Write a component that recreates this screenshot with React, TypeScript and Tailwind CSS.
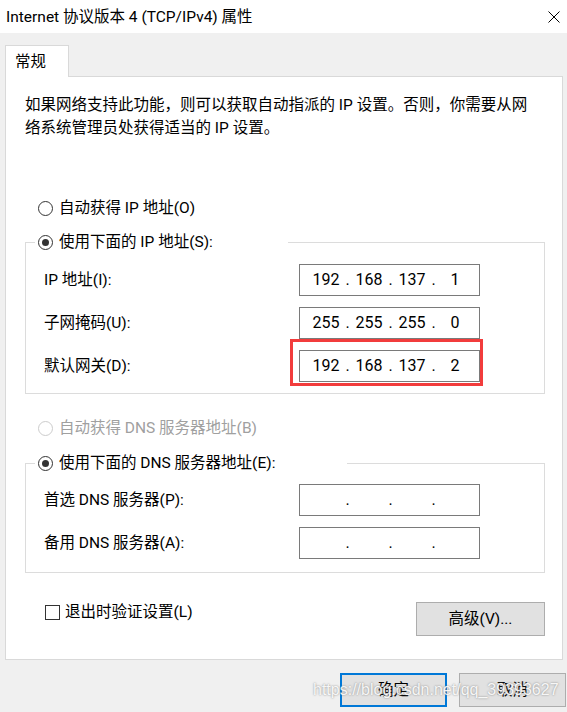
import React from "react";

function Radio({ checked, disabled }: { checked?: boolean; disabled?: boolean }) {
  return (
    <span
      className={
        "flex h-[15px] w-[15px] shrink-0 items-center justify-center rounded-full border bg-white " +
        (disabled ? "border-[#cccccc]" : "border-[#333333]")
      }
    >
      {checked && <span className="h-[7px] w-[7px] rounded-full bg-[#333333]" />}
    </span>
  );
}

function IpBox({ parts }: { parts: string[] }) {
  return (
    <div className="flex h-[32px] w-[181px] items-center border border-[#7a7a7a] bg-white pl-[8px] text-[16px] text-black">
      {parts.map((p, i) => (
        <React.Fragment key={i}>
          <span className="w-[36px] text-center">{p}</span>
          {i < 3 && <span className="w-[7px] text-center">.</span>}
        </React.Fragment>
      ))}
    </div>
  );
}

function Row({ label, children }: { label: string; children: React.ReactNode }) {
  return (
    <div className="grid grid-cols-[255px_181px] items-center">
      <span>{label}</span>
      {children}
    </div>
  );
}

export default function App() {
  return (
    <div className="relative h-[712px] w-[567px] overflow-hidden bg-[#f0f0f0] font-['Roboto','Noto_Sans_CJK_SC',sans-serif] text-[15.5px] leading-[22px] text-black">
      {/* title bar */}
      <div className="flex h-[33px] items-center justify-between bg-white pl-[6px] pr-[7px] text-[15.5px]">
        <span>Internet 协议版本 4 (TCP/IPv4) 属性</span>
        <svg width="12" height="12" viewBox="0 0 12 12">
          <path d="M0.5 0.5 L11.5 11.5 M11.5 0.5 L0.5 11.5" stroke="#000" strokeWidth="1" />
        </svg>
      </div>

      {/* tab */}
      <div className="ml-[5px] mt-[12px] flex">
        <div className="relative z-10 -mb-px flex h-[32px] w-[64px] items-center border border-b-0 border-[#d9d9d9] bg-white pl-[9px]">
          常规
        </div>
      </div>

      {/* panel */}
      <div className="ml-[5px] flex h-[584px] w-[558px] flex-col border border-[#d9d9d9] bg-white pl-[19px] pr-[17px] pt-[17px]">
        <p className="whitespace-nowrap leading-[23px]">
          如果网络支持此功能，则可以获取自动指派的 IP 设置。否则，你需要从网
          <br />
          络系统管理员处获得适当的 IP 设置。
        </p>

        <div className="mt-[57px] flex h-[22px] items-center gap-[6px] pl-[13px]">
          <Radio />
          <span>自动获得 IP 地址(O)</span>
        </div>

        <fieldset className="mt-[12px] border border-[#dcdcdc] pl-[9px]">
          <legend className="flex h-[22px] w-[253px] items-center gap-[6px] pl-[3px]">
            <Radio checked />
            <span>使用下面的 IP 地址(S):</span>
          </legend>
          <div className="flex flex-col gap-[11px] pb-[11px] pl-[9px] pt-[11px]">
            <Row label="IP 地址(I):">
              <IpBox parts={["192", "168", "137", "1"]} />
            </Row>
            <Row label="子网掩码(U):">
              <IpBox parts={["255", "255", "255", "0"]} />
            </Row>
            <Row label="默认网关(D):">
              <div className="relative">
                <IpBox parts={["192", "168", "137", "2"]} />
                <div className="absolute -bottom-[4px] -left-[9px] -right-[3px] -top-[11px] border-[3px] border-[#f23c3c]" />
              </div>
            </Row>
          </div>
        </fieldset>

        <div className="mt-[23px] flex h-[22px] items-center gap-[6px] pl-[13px] text-[#a0a0a0]">
          <Radio disabled />
          <span>自动获得 DNS 服务器地址(B)</span>
        </div>

        <fieldset className="mt-[13px] border border-[#dcdcdc] pl-[9px]">
          <legend className="flex h-[22px] w-[312px] items-center gap-[6px] pl-[3px]">
            <Radio checked />
            <span>使用下面的 DNS 服务器地址(E):</span>
          </legend>
          <div className="flex flex-col gap-[11px] pb-[13px] pl-[9px] pt-[10px]">
            <Row label="首选 DNS 服务器(P):">
              <IpBox parts={["", "", "", ""]} />
            </Row>
            <Row label="备用 DNS 服务器(A):">
              <IpBox parts={["", "", "", ""]} />
            </Row>
          </div>
        </fieldset>

        <div className="mt-[29px] flex items-start justify-between">
          <label className="ml-[20px] flex h-[20px] items-center gap-[5px]">
            <span className="h-[15px] w-[15px] border border-[#333333] bg-white" />
            <span>退出时验证设置(L)</span>
          </label>
          <button className="h-[34px] w-[129px] border border-[#adadad] bg-[#e1e1e1]">高级(V)...</button>
        </div>
      </div>

      {/* footer buttons */}
      <div className="mt-[13px] flex justify-end gap-[12px] pr-[1px]">
        <button className="h-[34px] w-[107px] border-2 border-[#0078d7] bg-[#e1e1e1]">确定</button>
        <button className="h-[34px] w-[107px] border border-[#adadad] bg-[#e1e1e1]">取消</button>
      </div>

      {/* watermark */}
      <span className="pointer-events-none absolute left-[313px] top-[679px] font-['Liberation_Sans',sans-serif] text-[16px] leading-[22px] text-white/90 [text-shadow:0_0_2px_#7a7a7a]">
        https://blog.csdn.net/qq_39393627
      </span>
    </div>
  );
}
